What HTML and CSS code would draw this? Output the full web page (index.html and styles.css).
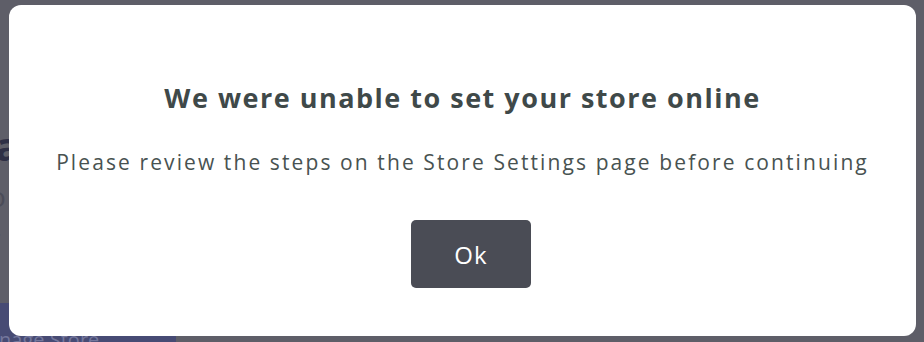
FILE: index.html
```html
<!DOCTYPE html>
<html>
<head>
<meta charset="utf-8">
<link rel="stylesheet" href="styles.css">
</head>
<body>
<div class="page">
  <div class="page-heading">Ca</div>
  <div class="page-line">o</div>
  <div class="page-line">r</div>
  <div class="page-button">Manage Store</div>
</div>
<div class="overlay">
  <div class="modal">
    <h2 class="modal-title">We were unable to set your store online</h2>
    <p class="modal-text">Please review the steps on the Store Settings page before continuing</p>
    <button class="modal-btn">Ok</button>
  </div>
</div>
</body>
</html>
```
FILE: styles.css
```css
html, body {
  margin: 0;
  padding: 0;
  width: 924px;
  height: 342px;
  overflow: hidden;
  background: #5e5e68;
  font-family: "Open Sans", Lato, sans-serif;
}
.page {
  display: flex;
  flex-direction: column;
  align-items: flex-start;
  padding-top: 122px;
}
.page-heading {
  font-size: 40px;
  font-weight: 700;
  color: #2e2f45;
  margin-left: -30px;
  line-height: 48px;
}
.page-line {
  font-size: 28px;
  color: #4b4c58;
  margin-left: -11px;
  line-height: 40px;
  margin-top: 6px;
}
.page-line + .page-line { margin-top: 2px; }
.page-button {
  margin-top: 45px;
  width: 176px;
  height: 39px;
  box-sizing: border-box;
  padding-top: 25px;
  background: #474b74;
  color: #74779c;
  font-size: 20px;
  line-height: 24px;
  text-indent: -30px;
  white-space: nowrap;
  overflow: hidden;
}
.overlay {
  position: absolute;
  inset: 0;
  padding: 5px 8px 6px 9px;
  box-sizing: border-box;
}
.modal {
  height: 331px;
  width: 907px;
  background: #fff;
  border-radius: 12px;
  display: flex;
  flex-direction: column;
  align-items: center;
  box-sizing: border-box;
  padding-top: 76px;
}
.modal-title {
  margin: 0;
  font-size: 27px;
  line-height: 34px;
  font-weight: 700;
  letter-spacing: 1.5px;
  color: #3f4949;
}
.modal-text {
  margin: 34px 0 0;
  font-size: 21px;
  line-height: 26px;
  letter-spacing: 2.1px;
  color: #485251;
}
.modal-btn {
  margin: 45px 0 0 17px;
  width: 120px;
  height: 68px;
  border: none;
  border-radius: 5px;
  background: #4a4c55;
  color: #fff;
  font-family: inherit;
  font-size: 24px;
  letter-spacing: 1px;
  padding: 0;
}
```
